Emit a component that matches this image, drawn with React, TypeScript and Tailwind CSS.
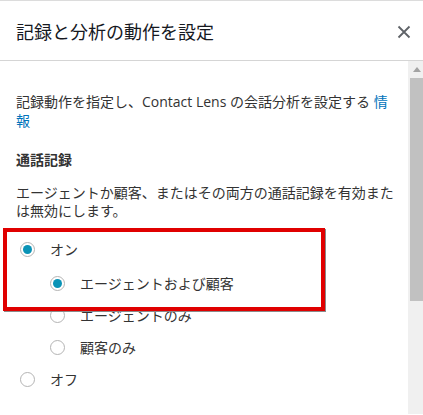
import React from "react";

const font = { fontFamily: '"Open Sans", "Noto Sans CJK JP", sans-serif' };

function Radio({ checked, label, indent }: { checked?: boolean; label: string; indent?: boolean }) {
  return (
    <div className={`flex items-center h-[32px] ${indent ? "pl-[50px]" : "pl-[20px]"}`}>
      <span className="w-[15px] h-[15px] rounded-full border-[1.5px] border-[#b4b4b4] bg-white flex items-center justify-center shrink-0">
        {checked && <span className="w-[9px] h-[9px] rounded-full bg-[#0a93b6]" />}
      </span>
      <span className="ml-[15px] text-[14px] text-[#333]">{label}</span>
    </div>
  );
}

export default function App() {
  return (
    <div className="w-[423px] h-[415px] bg-white overflow-hidden border-t border-[#dcdcdc] relative" style={font}>
      <div className="h-[60px] flex items-center justify-between pl-4 pr-[12px] border-b border-[#d5d5d5]">
        <div className="text-[18px] text-[#16191f] leading-none pt-[2px]">記録と分析の動作を設定</div>
        <svg width="14" height="14" viewBox="0 0 14 14" className="mt-[2px]">
          <path d="M1.5 1.5 L12.5 12.5 M12.5 1.5 L1.5 12.5" stroke="#5f6368" strokeWidth="1.8" />
        </svg>
      </div>
      <div className="flex h-[353px]">
        <div className="flex-1 pl-4 pr-[12px] pt-[31px] text-[#333]">
          <p className="text-[14px] leading-[19px]">
            記録動作を指定し、Contact Lens の会話分析を設定する <span className="text-[#0073bb]">情報</span>
          </p>
          <p className="text-[14px] leading-[19px] font-bold mt-[20px]">通話記録</p>
          <p className="text-[14px] leading-[18px] mt-[15px]">
            エージェントか顧客、またはその両方の通話記録を有効または無効にします。
          </p>
          <div className="-ml-4 mt-[13px]">
            <Radio checked label="オン" />
            <div className="mt-[2px]">
              <Radio checked indent label="エージェントおよび顧客" />
              <Radio indent label="エージェントのみ" />
              <Radio indent label="顧客のみ" />
            </div>
            <Radio label="オフ" />
          </div>
        </div>
        <div className="w-[15px] bg-[#f0f0f0] flex flex-col">
          <div className="h-[17px] flex items-center justify-center pl-[2px]">
            <svg width="8" height="5" viewBox="0 0 8 5">
              <path d="M0 5 L4 0 L8 5 Z" fill="#a3a3a3" />
            </svg>
          </div>
          <div className="h-[223px] ml-[2px] bg-[#c1c1c1]" />
        </div>
      </div>
      <div className="absolute left-[3px] top-[227px] w-[322px] h-[83px] border-[4px] border-[#e00000] shadow-[1px_1px_0_#8a8a8a]" />
    </div>
  );
}
